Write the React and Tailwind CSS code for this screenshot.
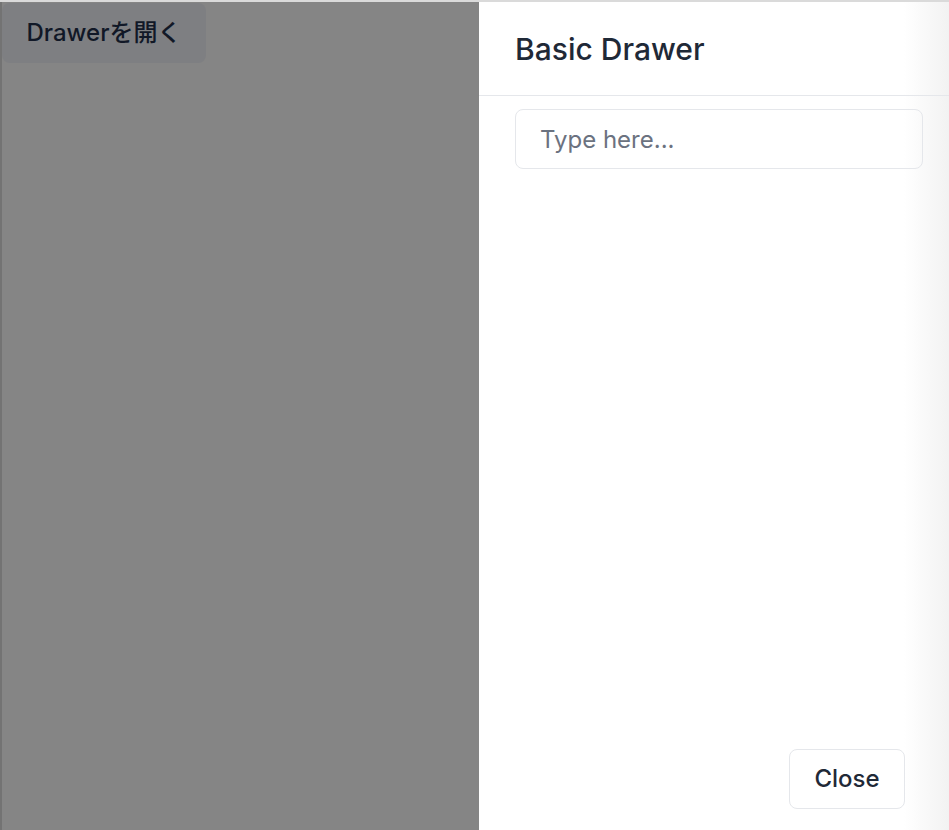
export default function App() {
  return (
    <div
      className="w-[949px] h-[830px] overflow-hidden flex flex-col bg-white"
      style={{ fontFamily: 'Inter, "Noto Sans CJK JP", sans-serif' }}
    >
      <div className="h-[2px] bg-[#dadada] shrink-0" />
      <div className="flex flex-1 min-h-0">
        <div className="w-[479px] shrink-0 bg-[#858585] border-l-2 border-[#737373]">
          <button className="mt-px h-[60px] w-[204px] rounded-lg bg-[#7e7f82] text-[24px] font-medium text-[#111827] flex items-center justify-center">
            Drawerを開く
          </button>
        </div>
        <div className="w-[480px] shrink-0 flex flex-col bg-[linear-gradient(to_right,#ffffff_0px,#ffffff_425px,#f2f2f2_470px)]">
          <div className="h-[94px] shrink-0 border-b border-[#e5e7eb] flex items-center px-9">
            <h2 className="text-[30px] font-medium text-[#1f2937] leading-none">Basic Drawer</h2>
          </div>
          <div className="flex-1 px-9 pt-[13px]">
            <input
              className="w-full h-[60px] rounded-lg border border-[#e5e7eb] px-6 text-[24px] text-[#1f2937] placeholder:text-[#6b7280] bg-transparent outline-none"
              placeholder="Type here..."
            />
          </div>
          <div className="flex justify-end pr-[54px] pb-[21px]">
            <button className="h-[60px] w-[116px] rounded-lg border border-[#e5e7eb] bg-white text-[24px] font-medium text-[#1f2937]">
              Close
            </button>
          </div>
        </div>
      </div>
    </div>
  );
}
